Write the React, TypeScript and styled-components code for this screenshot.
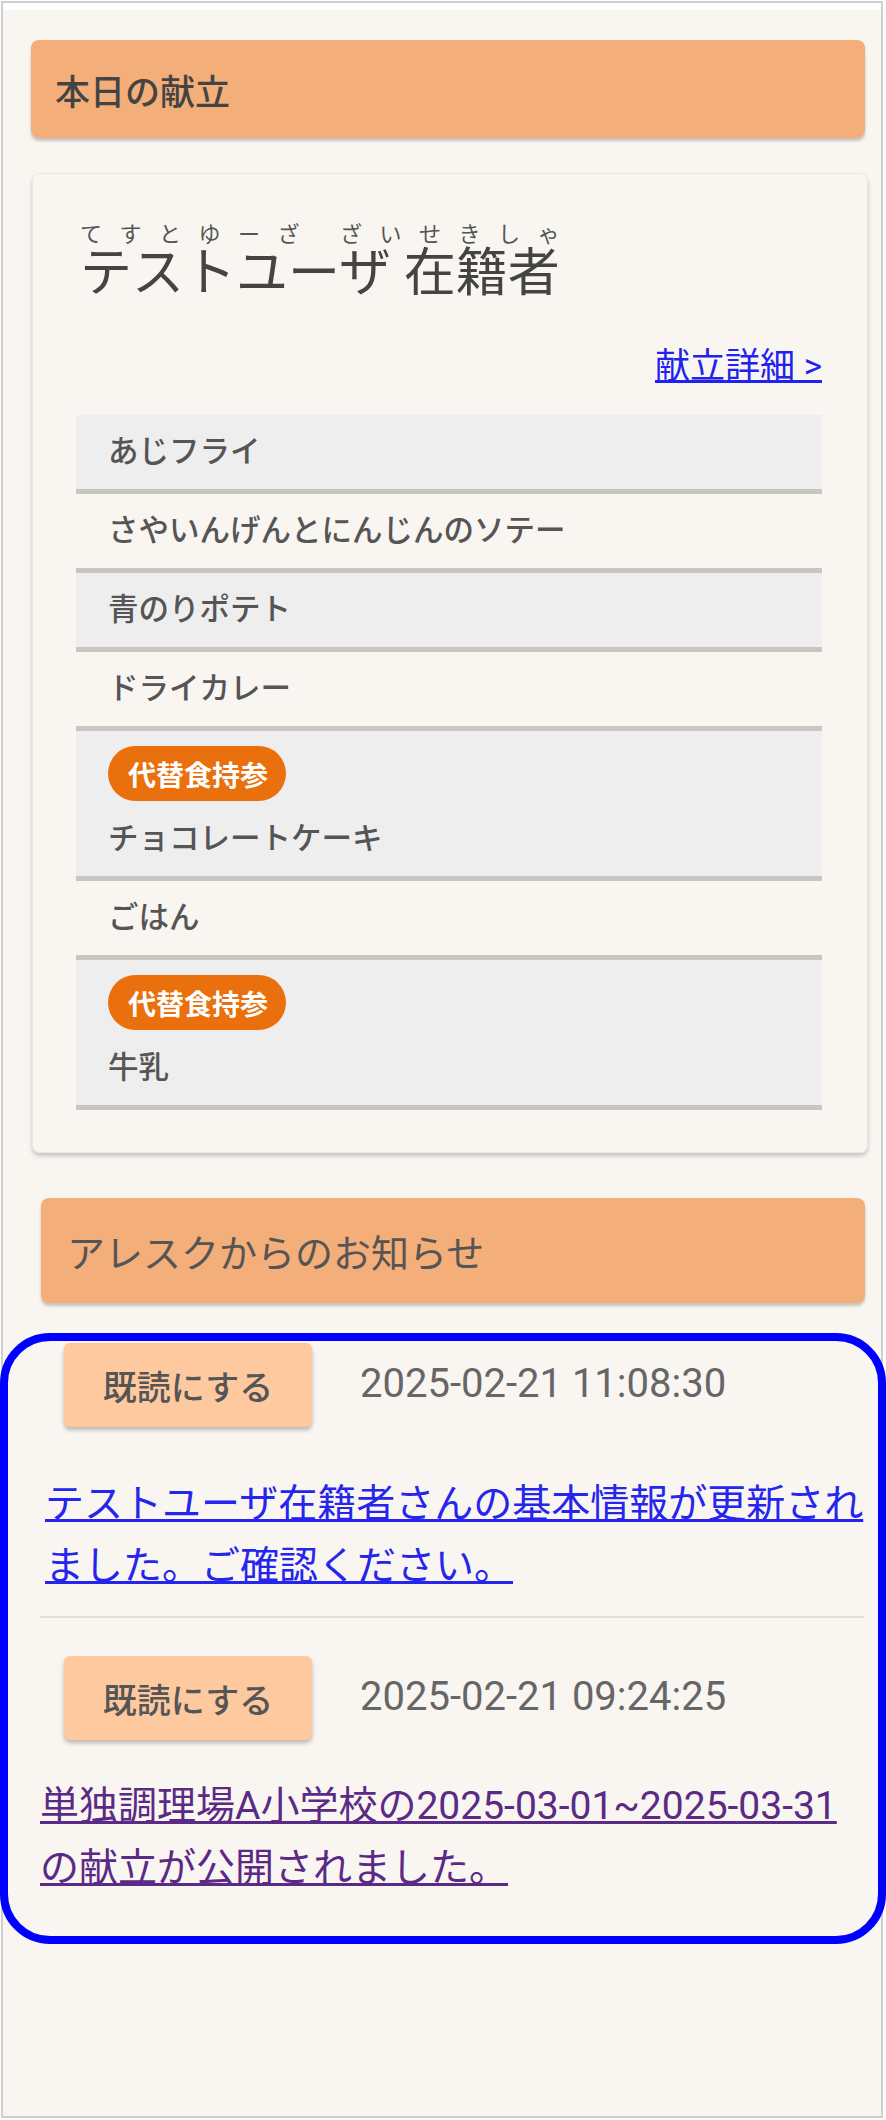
import React from "react";
import styled, { createGlobalStyle } from "styled-components";

const GlobalStyle = createGlobalStyle`
  html, body {
    margin: 0;
    padding: 0;
    background: #ffffff;
  }
  body {
    font-family: Roboto, "Noto Sans CJK JP", sans-serif;
  }
`;

const Page = styled.div`
  width: 886px;
  height: 2120px;
  box-sizing: border-box;
  padding: 1px 3px 2px 1px;
  background: #ffffff;
`;

const Frame = styled.div`
  height: 100%;
  box-sizing: border-box;
  border: 2px solid #cfcfcf;
  background: #f9f5f1;
`;

const Screen = styled.div`
  border-top: 7px solid #ffffff;
  padding: 30px 16px 0 28px;
`;

const SectionHeader = styled.h2<{ $news?: boolean }>`
  margin: ${(p) => (p.$news ? "45px 0 0 10px" : "0")};
  height: ${(p) => (p.$news ? "105px" : "98px")};
  display: flex;
  align-items: center;
  padding-left: ${(p) => (p.$news ? "26px" : "24px")};
  background: #f4ae7a;
  border-radius: 8px;
  box-shadow: 0 3px 3px rgba(0, 0, 0, 0.2);
  font-size: ${(p) => (p.$news ? "38px" : "35px")};
  font-weight: ${(p) => (p.$news ? 400 : 500)};
  color: ${(p) => (p.$news ? "#555555" : "#444444")};
`;

const MenuCard = styled.section`
  margin: 35px -3px 0 1px;
  padding: 50px 45px 42px 43px;
  border: 1px solid #ebe7e3;
  border-radius: 8px;
  box-shadow: 0 3px 4px rgba(0, 0, 0, 0.2);
`;

const NameBlock = styled.div`
  display: flex;
  flex-direction: column;
  padding-left: 4px;
  color: #444444;
`;

const Furigana = styled.div`
  font-size: 22px;
  line-height: 22px;
  letter-spacing: 17.5px;
  color: #555555;
  white-space: nowrap;
`;

const UserName = styled.div`
  margin-top: -2px;
  font-size: 52px;
  line-height: 60px;
  white-space: nowrap;
`;

const DetailRow = styled.div`
  display: flex;
  justify-content: flex-end;
  margin-top: 41px;
`;

const DetailLink = styled.a`
  font-size: 35px;
  line-height: 44px;
  color: #2222ee;
  text-decoration: underline;
`;

const MenuList = styled.ul`
  list-style: none;
  margin: 26px 0 0;
  padding: 0;
`;

const MenuItem = styled.li<{ $shaded?: boolean }>`
  display: flex;
  flex-direction: column;
  align-items: flex-start;
  padding: 15px 32px;
  background: ${(p) => (p.$shaded ? "#eeeeee" : "transparent")};
  border-bottom: 5px solid #c9c5c1;
`;

const Badge = styled.span`
  display: inline-flex;
  align-items: center;
  height: 55px;
  margin-bottom: 16px;
  padding: 0 18px 0 20px;
  border-radius: 28px;
  background: #e9700c;
  color: #ffffff;
  font-size: 28px;
  font-weight: 700;
`;

const ItemName = styled.span`
  font-size: 30.5px;
  line-height: 44px;
  font-weight: 500;
  color: #555555;
`;

const NewsPanel = styled.section`
  margin: 30px -21px 0 -31px;
  height: 611px;
  box-sizing: border-box;
  padding: 2px 14px 0 32px;
  border: 8px solid #0000ff;
  border-radius: 50px;
`;

const Notice = styled.article`
  display: flex;
  flex-direction: column;
`;

const NoticeHead = styled.div`
  display: flex;
  align-items: center;
  gap: 48px;
  padding-left: 24px;
`;

const ReadButton = styled.button`
  width: 248px;
  height: 84px;
  border: none;
  border-radius: 6px;
  background: #ffc99f;
  box-shadow: 0 3px 4px rgba(0, 0, 0, 0.25);
  font-family: inherit;
  font-size: 34px;
  font-weight: 500;
  color: #555555;
`;

const Timestamp = styled.span`
  margin-top: -4px;
  font-size: 40px;
  color: #666666;
`;

const NoticeLink = styled.a<{ $visited?: boolean; $gap: number }>`
  display: block;
  margin-top: ${(p) => p.$gap}px;
  padding-left: ${(p) => (p.$visited ? 0 : 5)}px;
  font-size: 39px;
  line-height: 62px;
  white-space: nowrap;
  color: ${(p) => (p.$visited ? "#5b2a86" : "#2525ee")};
  text-decoration: underline;
`;

const Divider = styled.hr`
  margin: 19px 0 38px;
  border: none;
  border-top: 2px solid #e2ded9;
`;

type Dish = { name: string; packed?: boolean };

const dishes: Dish[] = [
  { name: "あじフライ" },
  { name: "さやいんげんとにんじんのソテー" },
  { name: "青のりポテト" },
  { name: "ドライカレー" },
  { name: "チョコレートケーキ", packed: true },
  { name: "ごはん" },
  { name: "牛乳", packed: true },
];

const App: React.FC = () => {
  return (
    <>
      <GlobalStyle />
      <Page>
        <Frame>
          <Screen>
            <SectionHeader>本日の献立</SectionHeader>

            <MenuCard>
              <NameBlock>
                <Furigana>てすとゆーざ ざいせきしゃ</Furigana>
                <UserName>テストユーザ 在籍者</UserName>
              </NameBlock>
              <DetailRow>
                <DetailLink href="#">献立詳細 &gt;</DetailLink>
              </DetailRow>
              <MenuList>
                {dishes.map((d, i) => (
                  <MenuItem key={d.name} $shaded={i % 2 === 0}>
                    {d.packed && <Badge>代替食持参</Badge>}
                    <ItemName>{d.name}</ItemName>
                  </MenuItem>
                ))}
              </MenuList>
            </MenuCard>

            <SectionHeader $news>アレスクからのお知らせ</SectionHeader>

            <NewsPanel>
              <Notice>
                <NoticeHead>
                  <ReadButton>既読にする</ReadButton>
                  <Timestamp>2025-02-21 11:08:30</Timestamp>
                </NoticeHead>
                <NoticeLink href="#" $gap={46}>
                  テストユーザ在籍者さんの基本情報が更新され
                  <br />
                  ました。ご確認ください。
                </NoticeLink>
              </Notice>
              <Divider />
              <Notice>
                <NoticeHead>
                  <ReadButton>既読にする</ReadButton>
                  <Timestamp>2025-02-21 09:24:25</Timestamp>
                </NoticeHead>
                <NoticeLink href="#" $visited $gap={35}>
                  単独調理場A小学校の2025-03-01~2025-03-31
                  <br />
                  の献立が公開されました。
                </NoticeLink>
              </Notice>
            </NewsPanel>
          </Screen>
        </Frame>
      </Page>
    </>
  );
};

export default App;
